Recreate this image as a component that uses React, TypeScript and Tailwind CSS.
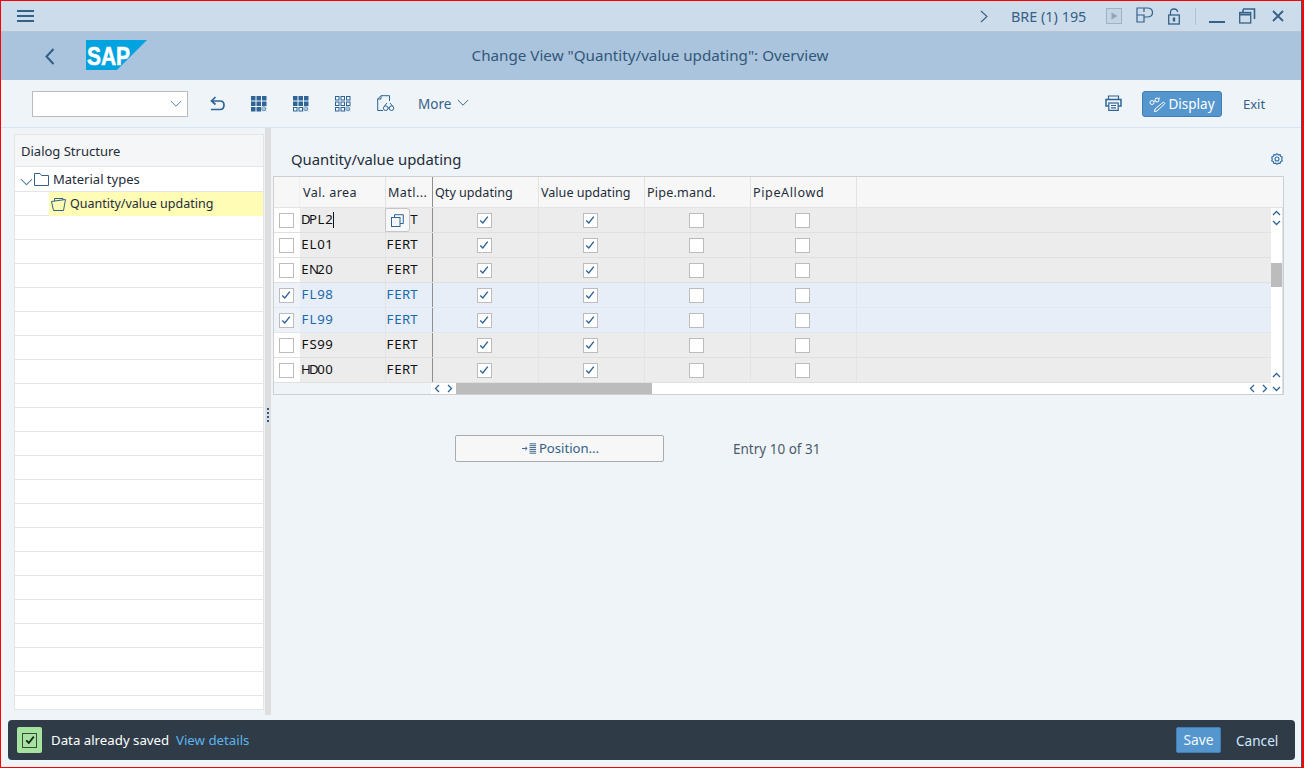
import React from "react";

const rows = [
  { a: "DPL2", b: "FERT", sel: false },
  { a: "EL01", b: "FERT", sel: false },
  { a: "EN20", b: "FERT", sel: false },
  { a: "FL98", b: "FERT", sel: true },
  { a: "FL99", b: "FERT", sel: true },
  { a: "FS99", b: "FERT", sel: false },
  { a: "HD00", b: "FERT", sel: false },
];

const Mono = ({ t }: { t: string }) => (
  <span className="inline-flex">
    {t.split("").map((c, i) => (
      <span key={i} className="inline-block w-[8px] text-center">{c}</span>
    ))}
  </span>
);

const Check = ({ size = 10, color = "#2f6497", sw = 1.4 }: { size?: number; color?: string; sw?: number }) => (
  <svg width={size} height={size} viewBox="0 0 10 10" fill="none">
    <path d="M1.2 5.4 L3.8 8 L8.8 1.6" stroke={color} strokeWidth={sw} />
  </svg>
);

const Box = ({ checked }: { checked?: boolean }) => (
  <div className="flex h-[15px] w-[15px] items-center justify-center border border-[#bcbcbc] bg-white">
    {checked ? <Check /> : null}
  </div>
);

const GridIcon = ({ filled }: { filled: number[] }) => {
  const cells = [];
  for (let r = 0; r < 3; r++) {
    for (let c = 0; c < 3; c++) {
      const i = r * 3 + c;
      if (i === 8) continue;
      const on = filled.includes(i);
      cells.push(
        on ? (
          <rect key={i} x={c * 5.5} y={r * 5.5} width="4.5" height="4.5" fill="#2e6596" />
        ) : (
          <rect key={i} x={c * 5.5 + 0.5} y={r * 5.5 + 0.5} width="3.5" height="3.5" fill="none" stroke="#2e6596" strokeWidth="1" />
        )
      );
    }
  }
  return (
    <svg width="17" height="17" viewBox="0 0 17 17" fill="none">
      {cells}
      <circle cx="12.8" cy="12.8" r="1.9" stroke="#6d98bc" strokeWidth="1.2" />
      <path d="M10.5 15.5 L15.5 10.5 M10.5 10.5 L15.5 15.5" stroke="#9db8cf" strokeWidth="0.8" />
    </svg>
  );
};

const Chevron = ({ w = 12, color = "#4f7ca3" }: { w?: number; color?: string }) => (
  <svg width={w} height={w * 0.6} viewBox="0 0 14 8" fill="none">
    <path d="M1 1 L7 7 L13 1" stroke={color} strokeWidth="1.1" />
  </svg>
);

const Small = ({ d }: { d: string }) => (
  <svg width="9" height="9" viewBox="0 0 9 9" fill="none">
    <path d={d} stroke="#2e6596" strokeWidth="1.3" />
  </svg>
);
const UP = "M1 6 L4.5 2.5 L8 6";
const DN = "M1 3 L4.5 6.5 L8 3";
const LF = "M6 1 L2.5 4.5 L6 8";
const RT = "M3 1 L6.5 4.5 L3 8";

export default function App() {
  return (
    <div className="relative h-[768px] w-[1305px] overflow-hidden bg-white font-['Noto_Sans','Open_Sans',sans-serif]">
      <div className="absolute left-0 top-0 h-[768px] w-[1304px] overflow-hidden border-y border-l border-r-2 border-[#ff0000] bg-[#eff4f9]">
        <div className="absolute right-0 top-0 z-10 h-full w-px bg-[#4a5661]" />
        {/* shell bar */}
        <div className="relative h-[31px] border-b border-[#b5c5d3] bg-[#cddcea] text-[#346187]">
          <svg className="absolute left-[16px] top-[9px]" width="17" height="13" viewBox="0 0 17 13" fill="#346187">
            <rect x="0" y="0" width="17" height="2" />
            <rect x="0" y="5" width="17" height="2" />
            <rect x="0" y="10" width="17" height="2" />
          </svg>
          <svg className="absolute left-[979px] top-[9px]" width="8" height="13" viewBox="0 0 8 13" fill="none">
            <path d="M1 1 L7 6.5 L1 12" stroke="#346187" strokeWidth="1.1" />
          </svg>
          <span className="absolute left-[1010px] top-[6px] text-[14.4px] leading-[19px]">BRE (1) 195</span>
          <svg className="absolute left-[1105px] top-[7px]" width="17" height="17" viewBox="0 0 17 17" fill="none">
            <rect x="0.5" y="0.5" width="15" height="15" stroke="#9fb3c5" fill="#c4d4e2" />
            <path d="M5.5 4.5 L11.5 8 L5.5 11.5 Z" fill="#8fa6ba" />
          </svg>
          <svg className="absolute left-[1135px] top-[6px]" width="18" height="17" viewBox="0 0 18 17" fill="none" stroke="#346187" strokeWidth="1.2">
            <path d="M1 1 H11 Q16.5 1 16.5 5.5 Q16.5 10 11 10 H8 V15 H1 Z M1 8 H8 V10 M8 1 V5" />
          </svg>
          <svg className="absolute left-[1167px] top-[7px]" width="12" height="17" viewBox="0 0 12 17" fill="none" stroke="#346187" strokeWidth="1.3">
            <path d="M2.5 7 V4 Q2.5 1 6 1 Q9.5 1 9.5 4" />
            <rect x="0.7" y="7" width="10.6" height="9" />
            <rect x="4.8" y="9.5" width="2.4" height="4" fill="#346187" stroke="none" />
          </svg>
          <div className="absolute left-[1194px] top-[7px] h-[17px] w-px bg-[#afc0cf]" />
          <div className="absolute left-[1208px] top-[20px] h-[2px] w-[16px] bg-[#346187]" />
          <svg className="absolute left-[1238px] top-[7px]" width="17" height="16" viewBox="0 0 17 16" fill="none" stroke="#346187" strokeWidth="1.3">
            <rect x="0.7" y="4.5" width="11" height="10.5" />
            <path d="M0.7 6.5 H11.7" strokeWidth="2" />
            <path d="M4 1 H15.5 V11 M4 1.4 V4" strokeWidth="1.6" />
          </svg>
          <svg className="absolute left-[1271px] top-[9px]" width="12" height="12" viewBox="0 0 12 12" fill="none" stroke="#346187" strokeWidth="1.8">
            <path d="M1 1 L11 11 M11 1 L1 11" />
          </svg>
        </div>
        {/* title bar */}
        <div className="relative h-[48px] bg-[#a9c4dc]">
          <svg className="absolute left-[44px] top-[16px]" width="10" height="17" viewBox="0 0 10 17" fill="none">
            <path d="M8.5 1 L1.5 8.5 L8.5 16" stroke="#2f5f8a" strokeWidth="2" />
          </svg>
          <svg className="absolute left-[85px] top-[8px]" width="62" height="30" viewBox="0 0 62 30">
            <polygon points="0,0 61,0 31,30 0,30" fill="#00a3e0" />
            <text x="1" y="24.5" textLength="43" lengthAdjust="spacingAndGlyphs" fontFamily="Liberation Sans" fontWeight="700" fontSize="26" fill="#fff" stroke="#fff" strokeWidth="0.6">SAP</text>
          </svg>
          <div className="absolute left-0 top-0 w-full pr-[3px] text-center text-[15.2px] leading-[47px] text-[#32577b]">Change View "Quantity/value updating": Overview</div>
        </div>
        {/* toolbar */}
        <div className="relative h-[48px] border-b border-[#d8e4ef] bg-[#eff4f9]">
          <div className="absolute left-[31px] top-[11px] flex h-[26px] w-[156px] items-center justify-end border border-[#bcbcbc] bg-white pr-[5px]">
            <Chevron />
          </div>
          <svg className="absolute left-[209px] top-[16px]" width="15" height="15" viewBox="0 0 15 15" fill="none" stroke="#2e6596" strokeWidth="1.7">
            <path d="M5.5 1 L1.5 5 L5.5 8.5 M1.5 5 H10 Q14 5 14 9 Q14 13.5 10 13.5 H1" />
          </svg>
          <div className="absolute left-[250px] top-[16px]"><GridIcon filled={[0, 1, 2, 3, 4, 5, 6, 7]} /></div>
          <div className="absolute left-[292px] top-[16px]"><GridIcon filled={[0, 1, 2, 3, 4, 5]} /></div>
          <div className="absolute left-[334px] top-[16px]"><GridIcon filled={[]} /></div>
          <svg className="absolute left-[376px] top-[15px]" width="18" height="17" viewBox="0 0 18 17" fill="none" stroke="#2e6596" strokeWidth="1">
            <path d="M12.5 6 V0.7 H4 L0.7 4 V15.5 H6 M4 0.7 V4 H0.7" />
            <circle cx="8.7" cy="13.2" r="2.3" />
            <circle cx="14.5" cy="13.2" r="2.3" />
            <path d="M7.5 11 L10 8 M15.5 11 L13 8 M11 13 H12.2" />
          </svg>
          <span className="absolute left-[417px] top-[15px] text-[13.5px] leading-[19px] text-[#346187]">More</span>
          <div className="absolute left-[456px] top-[19px]"><Chevron color="#346187" /></div>
          <svg className="absolute left-[1104px] top-[15px]" width="17" height="16" viewBox="0 0 17 16" fill="none" stroke="#2e6596" strokeWidth="1.2">
            <path d="M3.5 4 V1 H13.5 V4" />
            <path d="M3.5 11 H1 V4.5 H16 V11 H13.5" strokeWidth="1.5" />
            <rect x="3.8" y="8" width="9.4" height="7.4" />
            <path d="M6 10.5 H11 M6 12.8 H11" />
          </svg>
          <div className="absolute left-[1141px] top-[11px] flex h-[26px] w-[80px] items-center justify-center gap-[2px] rounded-[3px] border border-[#3f7fb5] bg-[#5496cd] text-[13.5px] text-white">
            <svg width="17" height="15" viewBox="0 0 17 15" fill="none" stroke="#fff" strokeWidth="1">
              <circle cx="3" cy="5.5" r="2" />
              <circle cx="8" cy="3" r="2" />
              <path d="M4.8 4.5 L6.2 3.8 M9.5 1.5 L11 0.8" />
              <path d="M14.5 5 L16 6.5 L8 14 L5.5 14.5 L6 12 Z" />
            </svg>
            <span>Display</span>
          </div>
          <span className="absolute left-[1242px] top-[15px] text-[13px] leading-[19px] text-[#346187]">Exit</span>
        </div>

        {/* left panel */}
        <div className="absolute left-[13px] top-[133px] w-[250px] border border-[#e5e5e5] bg-white text-[13px] text-[#1f2d3a]">
          <div className="h-[32px] border-b border-[#e5e5e5] bg-[#f5f6f7] pl-[6px] leading-[33px]">Dialog Structure</div>
          <div className="relative flex h-[25px] items-center border-b border-[#e5e5e5] pl-[38px]">
            <div className="absolute left-[5px] top-[11px]"><Chevron w={13} color="#5e84a6" /></div>
            <svg className="absolute left-[19px] top-[6px]" width="15" height="13" viewBox="0 0 15 13" fill="none" stroke="#34608c" strokeWidth="1">
              <path d="M0.5 12.5 V0.5 H6 L7.5 2.5 H14.5 V12.5 Z" />
            </svg>
            <span className="pt-[1px]">Material types</span>
          </div>
          <div className="relative h-[24px] border-b border-[#e5e5e5]">
            <div className="absolute left-[34px] top-0 flex h-[24px] w-[214px] items-center bg-[#fffcb5] pl-[21px] text-[12.5px]">
              <svg className="absolute left-[2px] top-[6px]" width="15" height="13" viewBox="0 0 15 13" fill="none" stroke="#34608c" strokeWidth="1">
                <path d="M0.5 3.5 L14.5 1.5 L12.5 12.5 H2.5 Z M3.5 3 V0.5 H12 V2" />
              </svg>
              Quantity/value updating
            </div>
          </div>
          {Array.from({ length: 20 }).map((_, i) => (
            <div key={i} className="h-[24px] border-b border-[#e5e5e5]" />
          ))}
          <div className="h-[13px]" />
        </div>

        {/* splitter */}
        <div className="absolute left-[264px] top-[127px] flex h-[587px] w-[6px] items-center justify-center bg-[#dedede]">
          <div className="mt-[-8px] flex translate-y-[-3px] flex-col gap-[2px]">
            <div className="h-[2px] w-[2px] bg-[#2e5f8a]" />
            <div className="h-[2px] w-[2px] bg-[#2e5f8a]" />
            <div className="h-[2px] w-[2px] bg-[#2e5f8a]" />
            <div className="h-[2px] w-[2px] bg-[#2e5f8a]" />
          </div>
        </div>

        {/* right title */}
        <div className="absolute left-[290px] top-[148px] text-[14.85px] leading-[20px] text-[#1f2d3a]">Quantity/value updating</div>
        <svg className="absolute left-[1270px] top-[152px]" width="12" height="12" viewBox="0 0 12 12" fill="none" stroke="#2e6ea6" strokeWidth="1.1">
          <path d="M6 0.7 L7.3 1.9 L9.1 1.6 L9.7 3.3 L11.3 4.2 L10.7 6 L11.3 7.8 L9.7 8.7 L9.1 10.4 L7.3 10.1 L6 11.3 L4.7 10.1 L2.9 10.4 L2.3 8.7 L0.7 7.8 L1.3 6 L0.7 4.2 L2.3 3.3 L2.9 1.6 L4.7 1.9 Z" />
          <circle cx="6" cy="6" r="2" />
        </svg>

        {/* table */}
        <div className="absolute left-[272px] top-[175px] h-[219px] w-[1011px] border border-[#cfcfcf] bg-[#eff4f9]">
          <div className="flex h-[31px] border-b border-[#e3e3e3] bg-[#f7f7f7] text-[12.6px] leading-[31px] text-[#1f2d3a]">
            <div className="w-[26px] border-r border-[#f0f0f0]" />
            <div className="w-[86px] border-r border-[#e3e3e3] pl-[3px] tracking-[0.4px]">Val. area</div>
            <div className="w-[47px] whitespace-nowrap border-r border-[#8f8f8f] pl-[2px] tracking-[0.4px]">Matl...</div>
            <div className="w-[106px] border-r border-[#e3e3e3] pl-[2px]">Qty updating</div>
            <div className="w-[106px] border-r border-[#e3e3e3] pl-[2px]">Value updating</div>
            <div className="w-[106px] border-r border-[#e3e3e3] pl-[2px] tracking-[0.2px]">Pipe.mand.</div>
            <div className="w-[106px] border-r border-[#e3e3e3] pl-[2px] tracking-[0.6px]">PipeAllowd</div>
          </div>
          {rows.map((r, i) => (
            <div key={r.a} className={`flex h-[25px] border-b text-[13.2px] ${r.sel ? "border-[#e2e8ef] bg-[#e7eef7] text-[#1a6aaa]" : "border-[#e0e0e0] bg-[#ececec] text-[#111]"}`}>
              <div className={`flex w-[26px] items-center justify-center pr-[2px] ${r.sel ? "bg-[#eef3f9]" : "bg-white"}`}>
                <Box checked={r.sel} />
              </div>
              <div className="relative w-[86px] border-r border-[#e4e4e4] pl-[1px] leading-[23px]">
                <Mono t={r.a} />
                {i === 0 ? <span className="absolute left-[33px] top-[4px] h-[16px] w-px bg-[#111]" /> : null}
              </div>
              <div className="relative w-[47px] border-r border-[#8f8f8f] leading-[23px]">
                <Mono t={r.b} />
                {i === 0 ? (
                  <div className="absolute left-[-1px] top-0 flex h-[24px] w-[25px] items-center justify-center rounded-r-[3px] border border-[#c6c6c6] bg-[#f7f7f7]">
                    <svg width="13" height="13" viewBox="0 0 13 13" fill="none" stroke="#2e6596" strokeWidth="1">
                      <rect x="0.5" y="3.5" width="8.5" height="9" />
                      <path d="M3.5 3.5 V0.7 H12.3 V9.5 H9" />
                    </svg>
                  </div>
                ) : null}
              </div>
              {[true, true, false, false].map((c, j) => (
                <div key={j} className={`flex w-[106px] items-center justify-center border-r pr-[3px] ${r.sel ? "border-[#dfe5ec]" : "border-[#e4e4e4]"}`}>
                  <Box checked={c} />
                </div>
              ))}
              <div className="flex-1" />
            </div>
          ))}
          {/* h scroll */}
          <div className="absolute left-0 top-[206px] flex h-[11px] w-[997px]">
            <div className="w-[157px] bg-[#eff4f9]" />
            <div className="flex w-[25px] items-center justify-center gap-[3px] bg-white"><Small d={LF} /><Small d={RT} /></div>
            <div className="w-[196px] bg-[#bcbcbc]" />
            <div className="flex-1 bg-white" />
            <div className="flex w-[25px] items-center justify-center gap-[3px] bg-white"><Small d={LF} /><Small d={RT} /></div>
          </div>
          {/* v scroll */}
          <div className="absolute left-[997px] top-[31px] h-[186px] w-[12px] border-r border-[#e0e0e0] bg-white">
            <div className="flex h-[22px] flex-col items-center pt-[1px]"><Small d={UP} /><Small d={DN} /></div>
            <div className="absolute left-0 top-[55px] h-[24px] w-[11px] bg-[#bcbcbc]" />
            <div className="absolute bottom-0 left-0 flex h-[24px] w-[11px] flex-col items-center justify-between py-[1px]"><Small d={UP} /><Small d={DN} /></div>
          </div>
        </div>

        {/* position */}
        <div className="absolute left-[454px] top-[434px] flex h-[27px] w-[209px] items-center justify-center gap-[2px] rounded-[2px] border border-[#ababab] bg-[#f7f7f7] pl-[2px] text-[13.1px] text-[#346187]">
          <svg width="15" height="11" viewBox="0 0 16 11" fill="none" stroke="#346187" strokeWidth="1">
            <path d="M0 5.5 H5 M3.5 3.8 L5.5 5.5 L3.5 7.2" />
            <path d="M8 0.5 H15 M8 2.5 H15 M8 4.5 H15 M8 6.5 H15 M8 8.5 H15 M8 10.5 H15" />
          </svg>
          <span>Position...</span>
        </div>
        <span className="absolute left-[732px] top-[439px] text-[13.5px] leading-[19px] text-[#4c5b69]">Entry 10 of 31</span>

        {/* footer */}
        <div className="absolute left-[7px] top-[719px] h-[40px] w-[1287px] rounded-[4px] bg-[#2f3c48] text-[13.25px]">
          <div className="absolute left-[9px] top-[7px] flex h-[26px] w-[25px] items-center justify-center rounded-[2px] bg-[#a7e3a0]">
            <div className="flex h-[15px] w-[15px] items-center justify-center border border-[#3a4a3a]">
              <Check size={10} color="#16261a" sw={1.8} />
            </div>
          </div>
          <span className="absolute left-[43px] top-[11px] leading-[19px] text-white">Data already saved</span>
          <span className="absolute left-[168px] top-[11px] leading-[19px] text-[#5eb3ea]">View details</span>
          <div className="absolute left-[1168px] top-[7px] flex h-[26px] w-[45px] items-center justify-center rounded-[2px] border border-[#3f7fb5] bg-[#5496cd] text-[13.8px] text-[#f2f7fb]">Save</div>
          <span className="absolute left-[1228px] top-[11px] text-[13.6px] leading-[19px] text-[#d1e8ff]">Cancel</span>
        </div>
      </div>
    </div>
  );
}
